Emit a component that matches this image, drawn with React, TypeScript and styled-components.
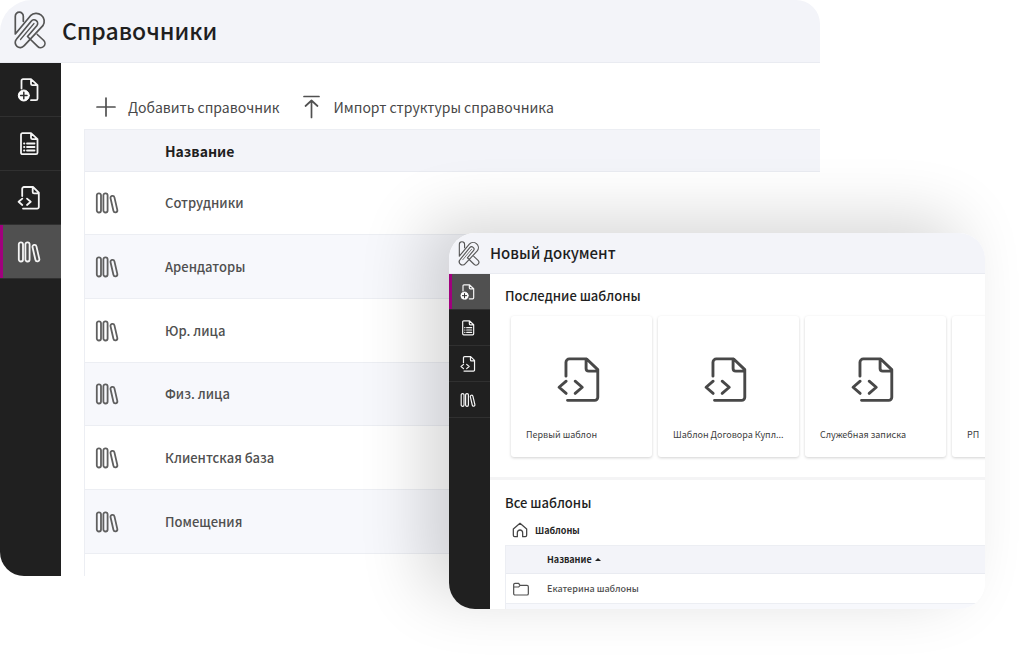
import React from 'react';
import styled, { createGlobalStyle, css } from 'styled-components';

const GlobalStyle = createGlobalStyle`
  *, *::before, *::after { box-sizing: border-box; }
  body {
    margin: 0;
    background: #fff;
    font-family: 'Noto Sans CJK SC', 'Noto Sans', sans-serif;
    color: #1f1f1f;
  }
  h1, h2, p { margin: 0; }
`;

const Stage = styled.main`
  display: grid;
  min-height: 100vh;
  align-items: start;
  overflow: hidden;
`;

const Window = styled.section<{ $front?: boolean }>`
  grid-area: 1 / 1;
  display: flex;
  flex-direction: column;
  background: #fff;
  overflow: hidden;
  ${(p) =>
    p.$front
      ? css`
          margin: 233px 39px 47px 449px;
          border-radius: 26px;
          box-shadow: -26px -14px 64px rgba(0, 0, 0, 0.16);
        `
      : css`
          margin-right: 204px;
          border-radius: 32px 24px 0 24px;
        `}
`;

const TitleBar = styled.header<{ $small?: boolean }>`
  display: flex;
  align-items: center;
  height: ${(p) => (p.$small ? 41 : 63)}px;
  padding: ${(p) => (p.$small ? '0 0 0 9px' : '0 0 2px 14px')};
  gap: ${(p) => (p.$small ? 10 : 16)}px;
  background: #f3f4f9;
  border-bottom: 1px solid #e9ebf1;
`;

const Title = styled.h1<{ $small?: boolean }>`
  font-size: ${(p) => (p.$small ? 15 : 23)}px;
  line-height: ${(p) => (p.$small ? 24 : 36)}px;
  font-weight: 500;
`;

const Body = styled.div`
  display: flex;
`;

const Nav = styled.nav<{ $small?: boolean }>`
  flex: none;
  display: flex;
  flex-direction: column;
  width: ${(p) => (p.$small ? 41 : 61)}px;
  background: #202020;
`;

const NavButton = styled.button<{ $small?: boolean; $active?: boolean }>`
  display: flex;
  align-items: center;
  justify-content: center;
  height: ${(p) => (p.$small ? 36 : 54)}px;
  padding: 0 3px 0 0;
  border: 0;
  border-bottom: 1px solid #303030;
  color: #f4f4f4;
  background: ${(p) => (p.$active ? '#505050' : 'transparent')};
  box-shadow: ${(p) => (p.$active ? 'inset 3px 0 #a0007d' : 'none')};
`;

const Content = styled.div`
  flex: 1;
  min-width: 0;
  padding: 22px 0 0 23px;
`;

const Toolbar = styled.div`
  display: flex;
  align-items: center;
  gap: 20px;
  height: 44px;
  padding-left: 10px;
`;

const ToolButton = styled.button`
  display: flex;
  align-items: center;
  gap: 10px;
  padding: 0;
  border: 0;
  background: none;
  color: #484848;
  font: 400 14px/22px 'Noto Sans CJK SC', 'Noto Sans', sans-serif;
  white-space: nowrap;
`;

const Table = styled.table<{ $small?: boolean }>`
  width: 100%;
  border-collapse: separate;
  border-spacing: 0;
  border-left: 1px solid #eceef3;
  table-layout: fixed;
  text-align: left;
  font-size: ${(p) => (p.$small ? 9 : 13)}px;
  line-height: ${(p) => (p.$small ? 16 : 22)}px;
`;

const Row = styled.tr<{ $height: number; $striped?: boolean }>`
  height: ${(p) => p.$height}px;
  background: ${(p) => (p.$striped ? '#f7f8fc' : '#fff')};
`;

const HeadCell = styled.th<{ $width?: number }>`
  width: ${(p) => (p.$width ? `${p.$width}px` : 'auto')};
  padding: 0;
  background: #f3f4f9;
  border-top: 1px solid #eceef3;
  border-bottom: 1px solid #e9ebf1;
  font-size: 14px;
  font-weight: 700;
`;

const Cell = styled.td<{ $indent?: number; $last?: boolean }>`
  padding: 0 0 0 ${(p) => p.$indent ?? 0}px;
  border-bottom: ${(p) => (p.$last ? '0' : '1px solid #eceef3')};
  color: #505050;
  font-weight: 500;
  svg { display: block; }
`;

const Panel = styled.div`
  flex: 1;
  min-width: 0;
`;

const Section = styled.section<{ $divided?: boolean }>`
  padding: ${(p) => (p.$divided ? '12px 0 20px 15px' : '13px 0 0 15px')};
  border-bottom: ${(p) => (p.$divided ? '3px solid #f4f4f5' : '0')};
`;

const SectionTitle = styled.h2`
  font-size: 13px;
  line-height: 20px;
  font-weight: 500;
`;

const Cards = styled.div`
  display: flex;
  gap: 6px;
  padding: 10px 0 6px 6px;
  margin-bottom: -6px;
  overflow: hidden;
`;

const Card = styled.article`
  flex: none;
  width: 141px;
  height: 141px;
  padding: 41px 14px 0 15px;
  border-radius: 3px;
  background: #fff;
  box-shadow: 0 1px 3px rgba(0, 0, 0, 0.18);
  svg { display: block; margin-left: 30px; }
`;

const CardName = styled.p`
  margin-top: 24px;
  white-space: nowrap;
  color: #404040;
  font-size: 9px;
  line-height: 16px;
  font-weight: 400;
`;

const Crumb = styled.a`
  display: flex;
  align-items: center;
  gap: 7px;
  height: 32px;
  padding: 2px 0 0 7px;
  color: #262626;
  font-size: 9px;
  font-weight: 700;
  text-decoration: none;
`;

const SortButton = styled.button`
  display: flex;
  align-items: center;
  gap: 3px;
  padding: 0;
  border: 0;
  background: none;
  color: #1f1f1f;
  font: 700 9px/16px 'Noto Sans CJK SC', 'Noto Sans', sans-serif;
`;

type IconProps = { size: number; stroke?: number; color?: string };

const Svg = ({ size, stroke = 1.5, color = 'currentColor', children }: IconProps & { children: React.ReactNode }) => (
  <svg width={size} height={size} viewBox="0 0 24 24" fill="none" stroke={color} strokeWidth={stroke}
    strokeLinecap="round" strokeLinejoin="round" aria-hidden="true">
    {children}
  </svg>
);

const Logo = ({ width, height }: { width: number; height: number }) => (
  <svg width={width} height={height} viewBox="0 0 32 38" fill="none" stroke="#555" strokeWidth="1.7"
    strokeLinecap="round" strokeLinejoin="round" aria-hidden="true">
    <path d="M9.3 10.300V5.200A4 4 0 0 0 1.300 5.200V23L16.500 4.700A8 8 0 0 1 28.900 14.700L10 34.800A4.900 4.900 0 0 1 2.400 28.300L17.200 10.200A3.600 3.600 0 0 1 22.800 14.800L13.500 25.500 23.600 35.300A4.100 4.100 0 0 0 29.800 29.500L23.300 23.500" />
    <path d="M6.500 28.500 20 12.500" strokeWidth="1.2" />
  </svg>
);

const AddDocIcon = (p: IconProps) => (
  <Svg {...p}>
    <path d="M4.500 10.500V2.700A1.500 1.500 0 0 1 6 1.200H14l6.500 6v13.500a1.500 1.500 0 0 1-1.500 1.500H14M14 1.200v4.500a1.500 1.500 0 0 0 1.500 1.500h5" />
    <circle cx="6.800" cy="17.500" r="5.500" fill="#fff" stroke="#fff" strokeWidth="1" />
    <path d="M6.800 14.300v6.400M3.600 17.500h6.400" stroke="#303030" strokeWidth="1.5" />
  </Svg>
);

const ListDocIcon = (p: IconProps) => (
  <Svg {...p}>
    <path d="M5.500 1.200H14l6.500 6v13.500a1.500 1.500 0 0 1-1.500 1.500H5.500A1.500 1.500 0 0 1 4 20.700V2.700A1.500 1.500 0 0 1 5.500 1.200ZM14 1.200v4.500a1.500 1.500 0 0 0 1.500 1.500h5" />
    <path d="M7 11.500h.4M10 11.500h7.500M7 15h.4M10 15h7.500M7 18.500h.4M10 18.500h7.500" />
  </Svg>
);

const CodeDocIcon = (p: IconProps) => (
  <Svg {...p}>
    <path d="M5.200 10V2.800A1.800 1.800 0 0 1 7 1h9l5.800 5.600V21a1.600 1.600 0 0 1-1.600 1.600H6M15.700 1v5a1.400 1.400 0 0 0 1.400 1.400h4.500" />
    <path d="m5.300 12.600-3.700 3.200 3.700 3.200M10 12.600l3.700 3.200L10 19" />
  </Svg>
);

const BooksIcon = (p: IconProps) => (
  <Svg {...p}>
    <rect x="1.800" y="2.300" width="4.200" height="19.200" rx="2" />
    <rect x="8.400" y="2.300" width="4.200" height="19.200" rx="2" />
    <rect x="16.900" y="4.700" width="4" height="16.800" rx="2" transform="rotate(-13 18.900 13)" />
  </Svg>
);

const PlusIcon = () => (
  <Svg size={24} stroke={1.7} color="#505050"><path d="M12 3v18M3 12h18" /></Svg>
);

const ImportIcon = () => (
  <Svg size={24} stroke={1.7} color="#505050"><path d="M4 1.500h15M11.500 5.500v17M5.500 11l6-5.500 6 5.500" /></Svg>
);

const HomeIcon = () => (
  <Svg size={16} stroke={1.9} color="#444">
    <path d="M2 10.500 12 2l10 8.500V20a2 2 0 0 1-2 2h-4v-6a4 4 0 0 0-8 0v6H4a2 2 0 0 1-2-2Z" />
  </Svg>
);

const FolderIcon = () => (
  <Svg size={16} stroke={1.8} color="#505050">
    <path d="M1 8V5.500A2 2 0 0 1 3 3.500h5.500l2 3H21A2 2 0 0 1 23 8.500V19a2 2 0 0 1-2 2H3a2 2 0 0 1-2-2ZM1 9h7.500l2-2.500" />
  </Svg>
);

const SortIcon = () => (
  <svg width="6" height="3" viewBox="0 0 6 3" aria-hidden="true"><path d="M0 3 3 0l3 3Z" fill="#222" /></svg>
);

const navItems = [
  { label: 'Новый документ', Icon: AddDocIcon },
  { label: 'Документы', Icon: ListDocIcon },
  { label: 'Шаблоны', Icon: CodeDocIcon },
  { label: 'Справочники', Icon: BooksIcon },
];

const SideNav = ({ active, small }: { active: number; small?: boolean }) => (
  <Nav $small={small}>
    {navItems.map(({ label, Icon }, i) => (
      <NavButton key={label} type="button" aria-label={label} $small={small} $active={i === active}>
        <Icon size={small ? 16 : 24} stroke={1.8} />
      </NavButton>
    ))}
  </Nav>
);

const directories = ['Сотрудники', 'Арендаторы', 'Юр. лица', 'Физ. лица', 'Клиентская база', 'Помещения'];
const templates = ['Первый шаблон', 'Шаблон Договора Купл...', 'Служебная записка', 'РП'];

const App = () => (
  <>
    <GlobalStyle />
    <Stage>
      <Window>
        <TitleBar>
          <Logo width={32} height={38} />
          <Title>Справочники</Title>
        </TitleBar>
        <Body>
          <SideNav active={3} />
          <Content>
            <Toolbar>
              <ToolButton type="button"><PlusIcon />Добавить справочник</ToolButton>
              <ToolButton type="button"><ImportIcon />Импорт структуры справочника</ToolButton>
            </Toolbar>
            <Table>
              <thead>
                <Row $height={43}>
                  <HeadCell $width={80} aria-label="Значок" />
                  <HeadCell>Название</HeadCell>
                </Row>
              </thead>
              <tbody>
                {directories.map((name, i) => (
                  <Row key={name} $height={i % 3 === 0 ? 63 : 64} $striped={i % 2 === 1}>
                    <Cell $indent={10}><BooksIcon size={24} stroke={1.8} color="#606060" /></Cell>
                    <Cell>{name}</Cell>
                  </Row>
                ))}
                <Row $height={22}>
                  <Cell $last /><Cell $last />
                </Row>
              </tbody>
            </Table>
          </Content>
        </Body>
      </Window>

      <Window $front>
        <TitleBar $small>
          <Logo width={22} height={25} />
          <Title $small>Новый документ</Title>
        </TitleBar>
        <Body>
          <SideNav active={0} small />
          <Panel>
            <Section $divided>
              <SectionTitle>Последние шаблоны</SectionTitle>
              <Cards>
                {templates.map((name) => (
                  <Card key={name}>
                    <CodeDocIcon size={46} stroke={1.5} color="#484848" />
                    <CardName>{name}</CardName>
                  </Card>
                ))}
              </Cards>
            </Section>
            <Section>
              <SectionTitle>Все шаблоны</SectionTitle>
              <Crumb href="#templates"><HomeIcon />Шаблоны</Crumb>
              <Table $small>
                <thead>
                  <Row $height={29}>
                    <HeadCell $width={41} aria-label="Значок" />
                    <HeadCell aria-sort="ascending"><SortButton type="button">Название<SortIcon /></SortButton></HeadCell>
                  </Row>
                </thead>
                <tbody>
                  <Row $height={30}>
                    <Cell $indent={7}><FolderIcon /></Cell>
                    <Cell>Екатерина шаблоны</Cell>
                  </Row>
                  <Row $height={5} $striped>
                    <Cell $last /><Cell $last />
                  </Row>
                </tbody>
              </Table>
            </Section>
          </Panel>
        </Body>
      </Window>
    </Stage>
  </>
);

export default App;
